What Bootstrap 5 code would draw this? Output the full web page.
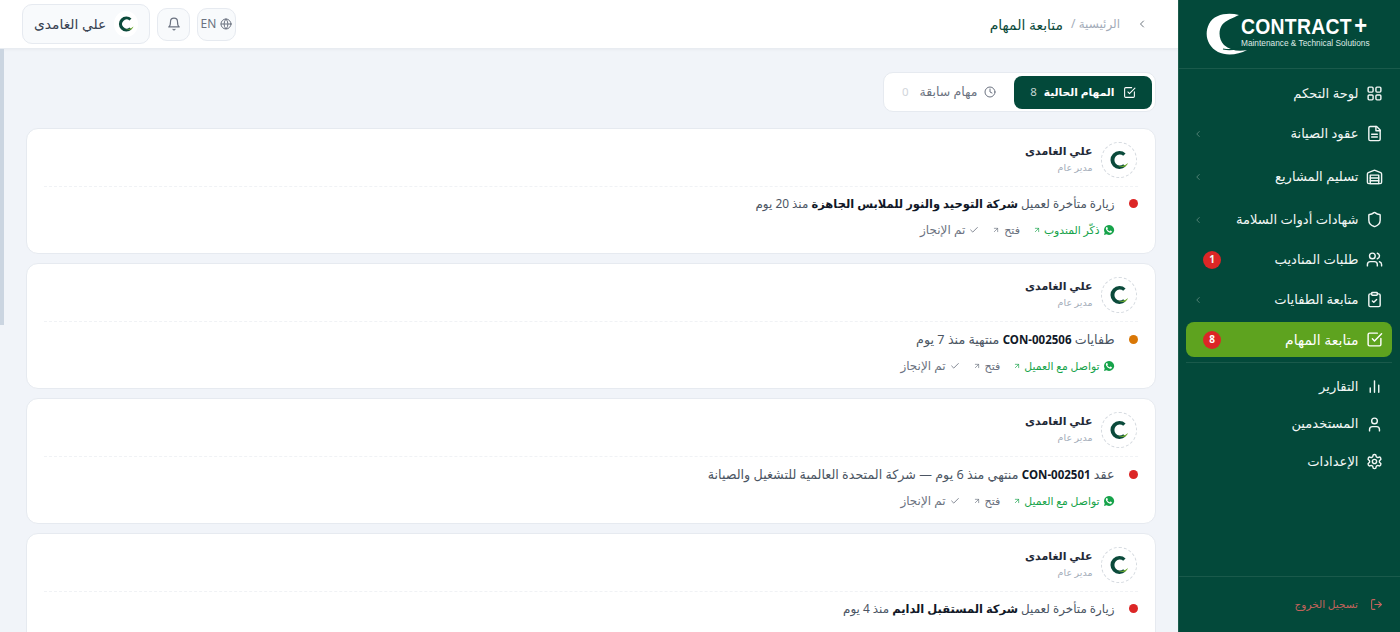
<!DOCTYPE html>
<html lang="ar" dir="rtl">

<head>
    <meta charset="UTF-8" />
    <meta name="viewport" content="width=device-width, initial-scale=1.0" />
    <title>متابعة المهام</title>
    <link href="https://cdn.jsdelivr.net/npm/bootstrap@5.3.3/dist/css/bootstrap.min.css" rel="stylesheet" />
    <style>
        html, body { height: 100%; overflow: hidden; }
        body { font-family: "Noto Sans", "DejaVu Sans", "Liberation Sans", sans-serif; background: #f1f4f9; color: #1f2937; font-size: 13px; }
        svg.ic { fill: none; stroke: currentColor; stroke-width: 2; stroke-linecap: round; stroke-linejoin: round; flex-shrink: 0; }
        span { white-space: nowrap; }

        .sidebar { width: 222px; background: #03493a; color: #fff; flex-shrink: 0; border-left: 1px solid #1d5c4d; }
        .brand { height: 69px; border-bottom: 1px solid #1a5a4b; padding-left: 27px; }
        .brand-logo { margin-right: -7px; flex-shrink: 0; }
        .brand-text { padding-bottom: 5px; }
        .brand-name { font-family: "Liberation Sans", sans-serif; font-weight: 700; font-size: 22px; letter-spacing: .3px; line-height: 20px; height: 20px; transform: scaleX(.88); transform-origin: left center; white-space: nowrap; }
        .brand-name span { font-size: 25px; line-height: 18px; margin-left: 3px; }
        .brand-sub { font-family: "Liberation Sans", sans-serif; font-size: 8.3px; line-height: 9px; color: #dfe9e6; white-space: nowrap; margin-top: 3px; }
        .side-nav { padding: 7px 8px 0 7px; }
        .side-link { height: 35px; margin-bottom: 5px; padding: 0 9px 0 7px; border-radius: 8px; color: #f2f7f5; font-size: 13.1px; font-weight: 500; text-decoration: none; gap: 7.5px; }
        .side-link.wide-gap { margin-bottom: 8px; }
        .side-link.has-badge { padding-left: 17px; }
        .side-link.short { height: 37.5px; margin-bottom: 0; }
        .side-link.active { background: #5ea31f; color: #fff; font-size: 14px; }
        .side-chev { color: #5e8a7e; }
        .side-badge { width: 18px; height: 18px; background: #dc2626; font-size: 10px; font-weight: 700; }
        .side-sep { border-top: 1px solid #1a5a4b; margin: 0 0 5px; }
        .side-foot { border-top: 1px solid #1a5a4b; height: 56px; padding: 0 17px; color: #c4635c; font-size: 10.5px; gap: 12px; }

        .topbar { height: 49px; background: #fff; border-bottom: 1px solid #e8ecf1; box-shadow: 0 1px 3px rgba(0, 0, 0, .04); padding: 0 30px 0 22px; flex-shrink: 0; }
        .crumb-root { color: #a3acb9; font-size: 12px; }
        .crumb-now { color: #0b4a3b; font-size: 14px; font-weight: 500; }
        .top-tools { gap: 7px; }
        .chip { background: #f8fafc; border: 1px solid #e6eaf0; color: #6b7280; }
        .chip-lang { width: 39px; height: 33px; border-radius: 10px; font-size: 12px; }
        .chip-bell { width: 33px; height: 33px; border-radius: 10px; }
        .chip-user { width: 128px; height: 40px; border-radius: 10px; font-size: 13.8px; color: #374151; padding: 0 11px; }
        .logo-dot { width: 26px; height: 26px; background: #fff; }

        .content { padding: 23px 22.5px 0 25.5px; overflow: hidden; }
        .rail { width: 4px; height: 276px; background: #cbd5e1; top: 49px; left: 0; }
        .tabs-box { width: 273px; height: 40px; background: #fff; border: 1px solid #e6eaf0; border-radius: 10px; padding: 3px; margin-bottom: 16px; gap: 18px; }
        .tab-on { width: 138px; height: 33px; background: #03493a; color: #fff; border-radius: 8px; font-size: 10.7px; font-weight: 700; padding: 0 16px; }
        .tab-on .cnt { color: #c6d6d1; font-weight: 400; margin-right: -1px; font-size: 11.5px; }
        .tab-off { color: #6b7280; font-size: 12.5px; gap: 6px; }
        .tab-off .cnt { color: #d1d5db; margin-right: 5px; font-size: 11.5px; }

        .task { height: 126px; background: #fff; border: 1px solid #e6eaf0; border-radius: 12px; margin-bottom: 9px; padding: 13px 17px 0 17px; }
        .task-head { height: 45px; padding-right: 1px; border-bottom: 1px dashed #f0f2f5; }
        .avatar { width: 36px; height: 36px; border: 1px dashed #d4d9df; background: #fff; }
        .t-name { font-size: 11px; font-weight: 600; color: #1f2937; line-height: 17px; white-space: nowrap; }
        .t-role { font-size: 9.5px; color: #a3acb9; line-height: 16px; margin-top: 1px; white-space: nowrap; }
        .t-line { gap: 14px; margin-top: 8px; }
        .t-dot { width: 9px; height: 9px; }
        .dot-red { background: #dc2626; }
        .dot-orange { background: #d97706; }
        .t-text { font-size: 12.7px; color: #4b5563; }
        .t-text.visit { font-size: 11.9px; }
        .t-text b { color: #111827; font-weight: 700; font-size: 11.5px; }
        .t-actions { margin: 8px 23px 0 0; gap: 13px; }
        .t-act { color: #6b7280; font-size: 12px; gap: 4px; }
        .t-open { color: #6b7280; font-size: 11px; gap: 4px; }
        .t-wa { color: #16a34a; font-size: 10.8px; gap: 3px; }
    </style>
</head>

<body>
    <svg width="0" height="0" class="position-absolute">
        <symbol id="i-grid" viewBox="0 0 24 24"><rect x="3" y="3" width="7" height="7" rx="1.5"/><rect x="14" y="3" width="7" height="7" rx="1.5"/><rect x="3" y="14" width="7" height="7" rx="1.5"/><rect x="14" y="14" width="7" height="7" rx="1.5"/></symbol>
        <symbol id="i-file" viewBox="0 0 24 24"><path d="M15 2H6a2 2 0 0 0-2 2v16a2 2 0 0 0 2 2h12a2 2 0 0 0 2-2V7z"/><path d="M14 2v6h6"/><path d="M16 13H8"/><path d="M16 17H8"/></symbol>
        <symbol id="i-ware" viewBox="0 0 24 24"><path d="M22 8.35V20a2 2 0 0 1-2 2H4a2 2 0 0 1-2-2V8.35a2 2 0 0 1 1.26-1.86l8-3.2a2 2 0 0 1 1.48 0l8 3.2A2 2 0 0 1 22 8.35z"/><path d="M6 18h12"/><path d="M6 14h12"/><rect x="6" y="10" width="12" height="12"/></symbol>
        <symbol id="i-shield" viewBox="0 0 24 24"><path d="M20 13c0 5-3.5 7.5-7.66 8.95a1 1 0 0 1-.67-.01C7.5 20.5 4 18 4 13V6a1 1 0 0 1 1-1c2 0 4.5-1.2 6.24-2.72a1.17 1.17 0 0 1 1.52 0C14.51 3.81 17 5 19 5a1 1 0 0 1 1 1z"/></symbol>
        <symbol id="i-users" viewBox="0 0 24 24"><path d="M16 21v-2a4 4 0 0 0-4-4H6a4 4 0 0 0-4 4v2"/><circle cx="9" cy="7" r="4"/><path d="M22 21v-2a4 4 0 0 0-3-3.87"/><path d="M16 3.13a4 4 0 0 1 0 7.75"/></symbol>
        <symbol id="i-clip" viewBox="0 0 24 24"><rect x="8" y="2" width="8" height="4" rx="1"/><path d="M16 4h2a2 2 0 0 1 2 2v14a2 2 0 0 1-2 2H6a2 2 0 0 1-2-2V6a2 2 0 0 1 2-2h2"/><path d="m9 14 2 2 4-4"/></symbol>
        <symbol id="i-check-sq" viewBox="0 0 24 24"><path d="M21 10.5V19a2 2 0 0 1-2 2H5a2 2 0 0 1-2-2V5a2 2 0 0 1 2-2h11"/><path d="m9 11 3 3L22 4"/></symbol>
        <symbol id="i-bars" viewBox="0 0 24 24"><path d="M18 20V10"/><path d="M12 20V4"/><path d="M6 20v-6"/></symbol>
        <symbol id="i-user" viewBox="0 0 24 24"><path d="M19 21v-2a4 4 0 0 0-4-4H9a4 4 0 0 0-4 4v2"/><circle cx="12" cy="7" r="4"/></symbol>
        <symbol id="i-gear" viewBox="0 0 24 24"><path d="M12.22 2h-.44a2 2 0 0 0-2 2v.18a2 2 0 0 1-1 1.73l-.43.25a2 2 0 0 1-2 0l-.15-.08a2 2 0 0 0-2.73.73l-.22.38a2 2 0 0 0 .73 2.73l.15.1a2 2 0 0 1 1 1.72v.51a2 2 0 0 1-1 1.74l-.15.09a2 2 0 0 0-.73 2.73l.22.38a2 2 0 0 0 2.73.73l.15-.08a2 2 0 0 1 2 0l.43.25a2 2 0 0 1 1 1.73V20a2 2 0 0 0 2 2h.44a2 2 0 0 0 2-2v-.18a2 2 0 0 1 1-1.73l.43-.25a2 2 0 0 1 2 0l.15.08a2 2 0 0 0 2.73-.73l.22-.39a2 2 0 0 0-.73-2.73l-.15-.08a2 2 0 0 1-1-1.74v-.5a2 2 0 0 1 1-1.74l.15-.09a2 2 0 0 0 .73-2.73l-.22-.38a2 2 0 0 0-2.73-.73l-.15.08a2 2 0 0 1-2 0l-.43-.25a2 2 0 0 1-1-1.73V4a2 2 0 0 0-2-2z"/><circle cx="12" cy="12" r="3"/></symbol>
        <symbol id="i-logout" viewBox="0 0 24 24"><path d="M9 21H5a2 2 0 0 1-2-2V5a2 2 0 0 1 2-2h4"/><path d="m16 17 5-5-5-5"/><path d="M21 12H9"/></symbol>
        <symbol id="i-chev-l" viewBox="0 0 24 24"><path d="m15 18-6-6 6-6"/></symbol>
        <symbol id="i-bell" viewBox="0 0 24 24"><path d="M6 8a6 6 0 0 1 12 0c0 7 3 9 3 9H3s3-2 3-9"/><path d="M10.3 21a1.94 1.94 0 0 0 3.4 0"/></symbol>
        <symbol id="i-globe" viewBox="0 0 24 24"><circle cx="12" cy="12" r="10"/><path d="M12 2a14.5 14.5 0 0 0 0 20 14.5 14.5 0 0 0 0-20"/><path d="M2 12h20"/></symbol>
        <symbol id="i-clock" viewBox="0 0 24 24"><circle cx="12" cy="12" r="10"/><path d="M12 6v6l4 2"/></symbol>
        <symbol id="i-check" viewBox="0 0 24 24"><path d="M20 6 9 17l-5-5"/></symbol>
        <symbol id="i-out" viewBox="0 0 24 24"><path d="M7 7h10v10"/><path d="M7 17 17 7"/></symbol>
        <symbol id="i-wa" viewBox="0 0 24 24"><path d="M12 2a10 10 0 0 0-8.600 15L2 22l5.200-1.400A10 10 0 1 0 12 2zm5.600 14c-.2.700-1.400 1.300-2 1.400-.5.100-1.200.100-1.900-.1-.5-.1-1-.3-1.700-.7-3-1.300-5-4.300-5.100-4.500-.2-.2-1.200-1.600-1.200-3s.8-2.200 1-2.500c.3-.3.600-.4.800-.4h.6c.2 0 .4 0 .600.500l.9 2.100c.1.200.1.300 0 .5l-.3.500-.4.500c-.1.100-.3.300-.1.600.2.300.8 1.300 1.700 2.100 1.200 1 2.100 1.400 2.400 1.500.3.100.5.100.6-.1l.9-1.100c.2-.3.400-.2.600-.1l2.100 1c.3.100.5.200.5.300.1.100.1.700-.1 1.300z" fill="currentColor" stroke="none"/></symbol>
        <symbol id="i-logo" viewBox="0 0 40 40"><path d="M31 9 A15 15 0 1 0 31 31 L27 27 A9 9 0 1 1 27 13 Z" fill="#0b4a3b" stroke="none"/><path d="M17 29 Q27 33 35 25 Q31 36 17 29Z" fill="#6aa92c" stroke="none"/></symbol>
    </svg>

    <div class="rail position-fixed"></div>

    <div class="d-flex vh-100">
        <!-- sidebar -->
        <aside class="sidebar d-flex flex-column">
            <div class="brand d-flex align-items-center" dir="ltr">
                <svg class="brand-logo" width="42" height="42" viewBox="0 0 42 42">
                    <path d="M33 2 C22 -1 8 1 3 11 C-2 21 1 33 12 39 C20 43 32 42 41 37 C32 39 24 37 18 32 C13 27 12 18 16 12 C20 7 27 5 33 2Z" fill="#fff"/>
                    <path d="M17 36 Q28 38 40 33" fill="none" stroke="#03493a" stroke-width="1.200"/>
                </svg>
                <div class="brand-text">
                    <div class="brand-name">CONTRACT<span>+</span></div>
                    <div class="brand-sub">Maintenance &amp; Technical Solutions</div>
                </div>
            </div>
            <nav class="side-nav">
                <a class="side-link d-flex align-items-center" href="#"><svg class="ic" width="17" height="17"><use href="#i-grid"/></svg><span>لوحة التحكم</span></a>
                <a class="side-link wide-gap d-flex align-items-center" href="#"><svg class="ic" width="17" height="17"><use href="#i-file"/></svg><span>عقود الصيانة</span><svg class="ic side-chev me-auto" width="10" height="10"><use href="#i-chev-l"/></svg></a>
                <a class="side-link wide-gap d-flex align-items-center" href="#"><svg class="ic" width="17" height="17"><use href="#i-ware"/></svg><span>تسليم المشاريع</span><svg class="ic side-chev me-auto" width="10" height="10"><use href="#i-chev-l"/></svg></a>
                <a class="side-link d-flex align-items-center" href="#"><svg class="ic" width="17" height="17"><use href="#i-shield"/></svg><span>شهادات أدوات السلامة</span><svg class="ic side-chev me-auto" width="10" height="10"><use href="#i-chev-l"/></svg></a>
                <a class="side-link has-badge d-flex align-items-center" href="#"><svg class="ic" width="17" height="17"><use href="#i-users"/></svg><span>طلبات المناديب</span><span class="side-badge rounded-circle d-flex align-items-center justify-content-center me-auto">1</span></a>
                <a class="side-link d-flex align-items-center" href="#"><svg class="ic" width="17" height="17"><use href="#i-clip"/></svg><span>متابعة الطفايات</span><svg class="ic side-chev me-auto" width="10" height="10"><use href="#i-chev-l"/></svg></a>
                <a class="side-link has-badge active d-flex align-items-center" href="#"><svg class="ic" width="17" height="17"><use href="#i-check-sq"/></svg><span>متابعة المهام</span><span class="side-badge rounded-circle d-flex align-items-center justify-content-center me-auto">8</span></a>
                <div class="side-sep"></div>
                <a class="side-link short d-flex align-items-center" href="#"><svg class="ic" width="17" height="17"><use href="#i-bars"/></svg><span>التقارير</span></a>
                <a class="side-link short d-flex align-items-center" href="#"><svg class="ic" width="17" height="17"><use href="#i-user"/></svg><span>المستخدمين</span></a>
                <a class="side-link short d-flex align-items-center" href="#"><svg class="ic" width="17" height="17"><use href="#i-gear"/></svg><span>الإعدادات</span></a>
            </nav>
            <div class="side-foot mt-auto d-flex align-items-center">
                <svg class="ic" width="13" height="13"><use href="#i-logout"/></svg><span>تسجيل الخروج</span>
            </div>
        </aside>

        <!-- main -->
        <div class="flex-grow-1 d-flex flex-column overflow-hidden">
            <header class="topbar d-flex align-items-center justify-content-between">
                <div class="d-flex align-items-center gap-2">
                    <svg class="ic text-secondary ms-2" width="12" height="12"><use href="#i-chev-l"/></svg>
                    <span class="crumb-root">الرئيسية /</span>
                    <span class="crumb-now">متابعة المهام</span>
                </div>
                <div class="top-tools d-flex align-items-center">
                    <div class="chip chip-lang d-flex align-items-center justify-content-center gap-1"><svg class="ic" width="12" height="12"><use href="#i-globe"/></svg><span>EN</span></div>
                    <div class="chip chip-bell d-flex align-items-center justify-content-center"><svg class="ic" width="14" height="14"><use href="#i-bell"/></svg></div>
                    <div class="chip chip-user d-flex align-items-center gap-2"><span class="logo-dot rounded-circle d-flex align-items-center justify-content-center"><svg width="20" height="20"><use href="#i-logo"/></svg></span><span>علي الغامدى</span></div>
                </div>
            </header>

            <main class="content flex-grow-1">
                <div class="tabs-box d-flex align-items-center">
                    <div class="tab-on d-flex align-items-center gap-2"><svg class="ic" width="13" height="13"><use href="#i-check-sq"/></svg><span>المهام الحالية</span><span class="cnt">8</span></div>
                    <div class="tab-off d-flex align-items-center"><svg class="ic" width="12" height="12"><use href="#i-clock"/></svg><span>مهام سابقة</span><span class="cnt">0</span></div>
                </div>

                <div class="task">
                    <div class="task-head d-flex gap-2">
                        <span class="avatar rounded-circle d-flex align-items-center justify-content-center"><svg width="24" height="24"><use href="#i-logo"/></svg></span>
                        <div><div class="t-name">علي الغامدى</div><div class="t-role">مدير عام</div></div>
                    </div>
                    <div class="t-line d-flex align-items-center">
                        <span class="t-dot dot-red rounded-circle"></span>
                        <span class="t-text visit">زيارة متأخرة لعميل <b>شركة التوحيد والنور للملابس الجاهزة</b> منذ 20 يوم</span>
                    </div>
                    <div class="t-actions d-flex align-items-center">
                        <span class="t-wa d-flex align-items-center"><svg width="12" height="12"><use href="#i-wa"/></svg>ذكّر المندوب<svg class="ic" width="8" height="8"><use href="#i-out"/></svg></span>
                        <span class="t-open d-flex align-items-center">فتح<svg class="ic" width="8" height="8"><use href="#i-out"/></svg></span>
                        <span class="t-act d-flex align-items-center"><svg class="ic" width="10" height="10"><use href="#i-check"/></svg>تم الإنجاز</span>
                    </div>
                </div>

                <div class="task">
                    <div class="task-head d-flex gap-2">
                        <span class="avatar rounded-circle d-flex align-items-center justify-content-center"><svg width="24" height="24"><use href="#i-logo"/></svg></span>
                        <div><div class="t-name">علي الغامدى</div><div class="t-role">مدير عام</div></div>
                    </div>
                    <div class="t-line d-flex align-items-center">
                        <span class="t-dot dot-orange rounded-circle"></span>
                        <span class="t-text">طفايات <b>CON-002506</b> منتهية منذ 7 يوم</span>
                    </div>
                    <div class="t-actions d-flex align-items-center">
                        <span class="t-wa d-flex align-items-center"><svg width="12" height="12"><use href="#i-wa"/></svg>تواصل مع العميل<svg class="ic" width="8" height="8"><use href="#i-out"/></svg></span>
                        <span class="t-open d-flex align-items-center">فتح<svg class="ic" width="8" height="8"><use href="#i-out"/></svg></span>
                        <span class="t-act d-flex align-items-center"><svg class="ic" width="10" height="10"><use href="#i-check"/></svg>تم الإنجاز</span>
                    </div>
                </div>

                <div class="task">
                    <div class="task-head d-flex gap-2">
                        <span class="avatar rounded-circle d-flex align-items-center justify-content-center"><svg width="24" height="24"><use href="#i-logo"/></svg></span>
                        <div><div class="t-name">علي الغامدى</div><div class="t-role">مدير عام</div></div>
                    </div>
                    <div class="t-line d-flex align-items-center">
                        <span class="t-dot dot-red rounded-circle"></span>
                        <span class="t-text">عقد <b>CON-002501</b> منتهي منذ 6 يوم — شركة المتحدة العالمية للتشغيل والصيانة</span>
                    </div>
                    <div class="t-actions d-flex align-items-center">
                        <span class="t-wa d-flex align-items-center"><svg width="12" height="12"><use href="#i-wa"/></svg>تواصل مع العميل<svg class="ic" width="8" height="8"><use href="#i-out"/></svg></span>
                        <span class="t-open d-flex align-items-center">فتح<svg class="ic" width="8" height="8"><use href="#i-out"/></svg></span>
                        <span class="t-act d-flex align-items-center"><svg class="ic" width="10" height="10"><use href="#i-check"/></svg>تم الإنجاز</span>
                    </div>
                </div>

                <div class="task">
                    <div class="task-head d-flex gap-2">
                        <span class="avatar rounded-circle d-flex align-items-center justify-content-center"><svg width="24" height="24"><use href="#i-logo"/></svg></span>
                        <div><div class="t-name">علي الغامدى</div><div class="t-role">مدير عام</div></div>
                    </div>
                    <div class="t-line d-flex align-items-center">
                        <span class="t-dot dot-red rounded-circle"></span>
                        <span class="t-text visit">زيارة متأخرة لعميل <b>شركة المستقبل الدايم</b> منذ 4 يوم</span>
                    </div>
                </div>
            </main>
        </div>
    </div>

    <script src="https://cdn.jsdelivr.net/npm/bootstrap@5.3.3/dist/js/bootstrap.bundle.min.js"></script>
</body>

</html>
